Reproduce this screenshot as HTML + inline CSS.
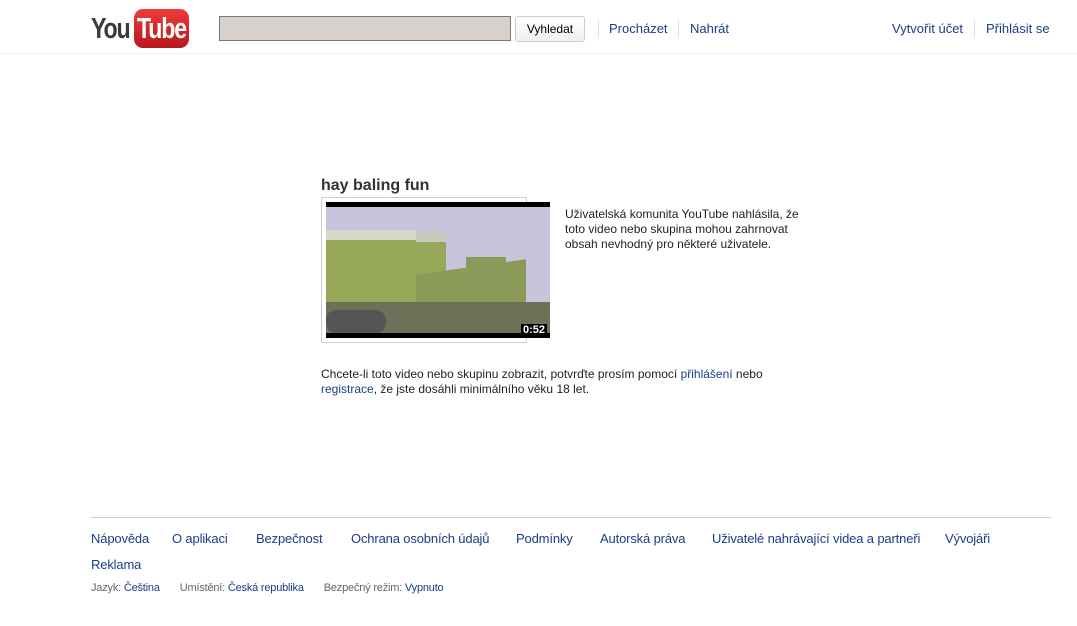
<!DOCTYPE html>
<html><head><meta charset="utf-8"><style>
body{margin:0;background:#fff;font-family:"Liberation Sans",Arial,sans-serif;width:1077px;height:626px;position:relative;overflow:hidden;color:#000}
a{color:#1a3d8a;text-decoration:none}
.abs{position:absolute}
.hdr a{font-size:13px}
.sep{position:absolute;width:1px;height:17px;background:#ddd;top:20px}
.ft a{position:absolute;font-size:13px;top:531px;letter-spacing:-0.15px}
</style></head><body>
<div class="abs" style="left:91px;top:9px;width:98px;height:40px">
 <span class="abs" style="left:0;top:4px;font:bold 29px 'Liberation Sans Narrow','Liberation Sans',sans-serif;color:#3a3a3a;letter-spacing:-1.5px;transform:scaleX(0.8);transform-origin:left">You</span>
 <div class="abs" style="left:43px;top:0;width:55px;height:39px;border-radius:9px;background:linear-gradient(#f23a3a,#b5191d)"></div>
 <span class="abs" style="left:46px;top:4px;font:bold 29px 'Liberation Sans Narrow','Liberation Sans',sans-serif;color:#fff;letter-spacing:-1.5px;transform:scaleX(0.8);transform-origin:left">Tube</span>
</div>
<div class="abs" style="left:219px;top:16px;width:290px;height:23px;background:#d7d0cb;border:1px solid #777"></div>
<div class="abs" style="left:515px;top:16px;width:68px;height:24px;border:1px solid #ccc;border-radius:3px;background:linear-gradient(#fff,#f0f0f0);font-size:12px;text-align:center;line-height:25px">Vyhledat</div>
<div class="hdr">
<div class="sep" style="left:598px"></div>
<a class="abs" style="left:609px;top:21px">Procházet</a>
<div class="sep" style="left:678px"></div>
<a class="abs" style="left:690px;top:21px">Nahrát</a>
<a class="abs" style="left:892px;top:21px">Vytvořit účet</a>
<div class="sep" style="left:974px"></div>
<a class="abs" style="left:986px;top:21px">Přihlásit se</a>
</div>
<div class="abs" style="left:0;top:53px;width:1077px;height:1px;background:#eee"></div>
<div class="abs" style="left:321px;top:177px;font-weight:bold;font-size:16px;color:#333">hay baling fun</div>
<div class="abs" style="left:321px;top:197px;width:204px;height:144px;border:1px solid #ccc;border-radius:2px"></div>
<div class="abs" style="left:326px;top:202px;width:224px;height:136px;background:#000;overflow:hidden">
 <div class="abs" style="left:0;top:5px;width:224px;height:126px;background:#c9c4dc"></div>
 <div class="abs" style="left:0;top:28px;width:90px;height:15px;background:#d8d8c8"></div>
 <div class="abs" style="left:0;top:38px;width:120px;height:70px;background:#98a85a"></div>
 <div class="abs" style="left:90px;top:30px;width:30px;height:10px;background:#c8c8b8"></div>
 <div class="abs" style="left:90px;top:65px;width:110px;height:50px;background:#8c9a58;transform:skewY(-8deg)"></div>
 <div class="abs" style="left:140px;top:55px;width:40px;height:30px;background:#8a9a5a"></div>
 <div class="abs" style="left:0;top:100px;width:224px;height:31px;background:#6e7058"></div>
 <div class="abs" style="left:0;top:108px;width:60px;height:23px;background:#555;border-radius:10px"></div>
 <div class="abs" style="right:3px;bottom:2px;background:#000;color:#fff;font-weight:bold;font-size:11px;padding:0 2px">0:52</div>
</div>
<div class="abs" style="left:565px;top:207px;width:250px;font-size:12px;line-height:15px;color:#222">Uživatelská komunita YouTube nahlásila, že toto video nebo skupina mohou zahrnovat obsah nevhodný pro některé uživatele.</div>
<div class="abs" style="left:321px;top:367px;width:470px;font-size:12px;line-height:15px;color:#222">Chcete-li toto video nebo skupinu zobrazit, potvrďte prosím pomocí <a>přihlášení</a> nebo <a>registrace</a>, že jste dosáhli minimálního věku 18 let.</div>
<div class="abs" style="left:91px;top:517px;width:960px;height:1px;background:#ccc"></div>
<div class="ft">
<a style="left:91px">Nápověda</a><a style="left:172px">O aplikaci</a><a style="left:256px">Bezpečnost</a><a style="left:351px">Ochrana osobních údajů</a><a style="left:516px">Podmínky</a><a style="left:600px">Autorská práva</a><a style="left:712px">Uživatelé nahrávající videa a partneři</a><a style="left:945px">Vývojáři</a><a style="left:91px;top:557px">Reklama</a>
</div>
<div class="abs" style="left:91px;top:582px;font-size:11px;color:#666;white-space:nowrap;letter-spacing:-0.2px">Jazyk: <a>Čeština</a><span style="display:inline-block;width:20px"></span>Umístění: <a>Česká republika</a><span style="display:inline-block;width:20px"></span>Bezpečný režim: <a>Vypnuto</a></div>
</body></html>
